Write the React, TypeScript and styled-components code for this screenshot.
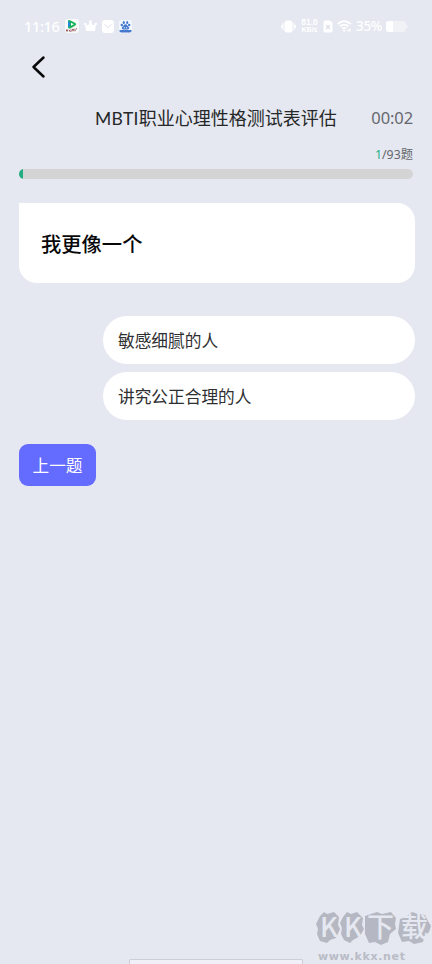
import React from "react";
import styled, { createGlobalStyle } from "styled-components";

const GlobalStyle = createGlobalStyle`
  * { box-sizing: border-box; }
  body {
    margin: 0;
    background: #e5e8f0;
    font-family: "Noto Sans CJK SC", "Noto Sans", sans-serif;
  }
`;

const Screen = styled.div`
  position: relative;
  display: flex;
  flex-direction: column;
  width: 432px;
  height: 964px;
  overflow: hidden;
  background: #e5e8f0;
`;

const StatusBar = styled.header`
  display: flex;
  justify-content: space-between;
  align-items: center;
  height: 52px;
  padding: 0 24px;
  color: #fff;
`;

const StatusGroup = styled.div<{ $gap: number }>`
  display: flex;
  align-items: center;
  gap: ${(p) => p.$gap}px;
`;

const Clock = styled.span`
  width: 36px;
  font: 500 14.5px/20px "Noto Sans", sans-serif;
  letter-spacing: -0.35px;
  white-space: nowrap;
`;

const NetSpeed = styled.span`
  display: flex;
  flex-direction: column;
  align-items: center;
  gap: 0;
  width: 19px;
  white-space: nowrap;
`;

const SpeedLine = styled.span<{ $size: number }>`
  height: 8px;
  font: 700 ${(p) => p.$size}px/8px "Liberation Sans", sans-serif;
`;

const Battery = styled.span`
  width: 26px;
  font: 500 13.5px/20px "Noto Sans", sans-serif;
  letter-spacing: -0.3px;
`;

const NavBar = styled.nav`
  display: flex;
  align-items: center;
  height: 30px;
  padding-left: 30px;
`;

const BackButton = styled.button`
  display: flex;
  width: 18px;
  height: 24px;
  padding: 0;
  border: 0;
  background: none;
`;

const Content = styled.main`
  display: flex;
  flex-direction: column;
  padding: 21px 17px 0 19px;
`;

const TitleRow = styled.div`
  display: flex;
  justify-content: flex-end;
  align-items: center;
  gap: 33px;
  height: 29px;
  padding-right: 2px;
`;

const Title = styled.h1`
  margin: 0;
  width: 243px;
  font-size: 18px;
  line-height: 28px;
  font-weight: 400;
  color: #262729;
  white-space: nowrap;
`;

const Latin = styled.span`
  font-family: Lato, sans-serif;
  font-size: 17.5px;
  letter-spacing: 0.3px;
`;

const Timer = styled.span`
  width: 42px;
  font: 400 16.5px/28px "Noto Sans", sans-serif;
  letter-spacing: -0.1px;
  text-align: right;
  color: #65676d;
  white-space: nowrap;
`;

const Counter = styled.div`
  height: 20px;
  margin-top: 13px;
  padding-right: 2px;
  font: 400 12.3px/20px "Noto Sans", "Noto Sans CJK SC", sans-serif;
  text-align: right;
  color: #65676d;
`;

const Current = styled.span`
  color: #21ad87;
`;

const Track = styled.div`
  height: 10px;
  margin: 4px 2px 0 0;
  border-radius: 5px;
  background: #d4d4d4;
  overflow: hidden;
`;

const Fill = styled.div`
  width: 4px;
  height: 100%;
  background: #21ad81;
`;

const QuestionCard = styled.section`
  display: flex;
  align-items: center;
  height: 80px;
  margin-top: 24px;
  padding: 0 22px;
  border-radius: 0 18px 18px 18px;
  background: #fff;
  font-size: 20.3px;
  font-weight: 500;
  color: #08080a;
`;

const Answers = styled.div`
  display: flex;
  flex-direction: column;
  gap: 8.5px;
  margin: 32.5px 0 0 84px;
`;

const Answer = styled.button`
  height: 48px;
  padding: 0 15px;
  border: 0;
  border-radius: 24px;
  background: #fff;
  font: 400 16.7px/24px "Noto Sans CJK SC", sans-serif;
  text-align: left;
  color: #2e2f31;
`;

const PreviousButton = styled.button`
  width: 77px;
  height: 42px;
  margin-top: 24px;
  padding: 0;
  border: 0;
  border-radius: 9px;
  background: #646bff;
  font: 400 16.7px/24px "Noto Sans CJK SC", sans-serif;
  color: #fff;
`;

const Watermark = styled.div`
  position: absolute;
  left: 315px;
  bottom: 0;
  width: 117px;
  height: 54px;
`;

const StoneLogo = styled.svg`
  display: block;
  overflow: visible;
`;

const SiteAddress = styled.div`
  padding-left: 3px;
  margin-top: 4px;
  font: 700 11px/14px "DejaVu Sans", sans-serif;
  letter-spacing: 0.65px;
  color: #b9bcc6;
  white-space: nowrap;
`;

const HomeHandle = styled.div`
  position: absolute;
  left: 129px;
  bottom: 0;
  width: 174px;
  height: 5px;
  border: 1px solid #cdcdd7;
  border-bottom: 0;
  border-radius: 2px 2px 0 0;
  background: #f1f0f8;
`;

const VideoIcon = () => (
  <svg width="14" height="14" viewBox="0 0 14 14">
    <rect width="14" height="14" rx="3" fill="#f7faf9" />
    <path d="M3 2.2Q3 .5 5 1.2L10.4 4Q12 5.2 10.4 6.5L5.3 9.4Q3 10 3 8Z" fill="#16b456" />
    <path d="M3 2.2v6.3L5.2 7V3Z" fill="#2288d5" />
    <path d="m6 3.7 2.8 1.5L6 6.8Z" fill="#fff" />
    <path d="M1 11.3h2m-1-1v2.5m2-2 1 2m1-2.5v2.5m1-2h2m-1-1v2.5m2-2.5v2.5m1-2.5h1" stroke="#8d4549" strokeWidth=".9" />
  </svg>
);
const CrownIcon = () => (
  <svg width="13" height="12" viewBox="0 0 13 12" fill="#fff">
    <path d="m1 4 3 1.5L6.5 1 9 5.5 12 4l-1 7H2Z" />
    <circle cx="1.2" cy="4" r="1.2" /><circle cx="11.8" cy="4" r="1.2" /><circle cx="6.5" cy="1.7" r="1.4" />
  </svg>
);
const MailIcon = () => (
  <svg width="12" height="13" viewBox="0 0 12 13">
    <rect width="12" height="13" rx="3" fill="#fff" />
    <path d="m2.5 4.5 3.5 3 3.5-3" fill="none" stroke="#dfe3ec" />
  </svg>
);
const PawIcon = () => (
  <svg width="13" height="13" viewBox="0 0 13 13">
    <rect width="13" height="13" rx="3" fill="#f3f8ff" />
    <g fill="#4479cc">
      <ellipse cx="4.8" cy="2.5" rx="1.1" ry="1.5" /><ellipse cx="8.2" cy="2.5" rx="1.1" ry="1.5" />
      <circle cx="2.8" cy="5" r="1.2" /><circle cx="10.2" cy="5" r="1.2" />
      <path d="M6.5 4.2C4.8 4.2 4.6 6 3.2 7c-1 1 0 2.5 1.2 2.5h4.2c1.2 0 2.2-1.5 1.2-2.5-1.4-1-1.6-2.8-3.3-2.8Z" />
      <path d="M.5 10h12v1.4l-1.5 1.1H2L.5 11.4Z" />
    </g>
    <path d="M4.8 7h1v1.4h-1Zm2.3 0h1v1.4h-1Z" fill="#cfe1ff" />
  </svg>
);
const VibrateIcon = () => (
  <svg width="15" height="13" viewBox="0 0 15 13" fill="#fff">
    <rect x="3.5" y="0.5" width="8" height="12" rx="2.5" />
    <path d="M2 3v7M.7 5v3M13 3v7M14.3 5v3" stroke="#fff" strokeWidth="1.1" />
  </svg>
);
const SimIcon = () => (
  <svg width="10" height="13" viewBox="0 0 10 13">
    <path d="M2 .5h5L9.5 3v7.5q0 2-2 2H2q-1.5 0-1.5-2V2Q.5.5 2 .5Z" fill="#fff" />
    <path d="m3 5 4 4m0-4L3 9" stroke="#dce0ea" strokeWidth="1.2" />
  </svg>
);
const WifiIcon = () => (
  <svg width="15" height="12" viewBox="0 0 15 12" fill="none" stroke="#fff" strokeWidth="1.7">
    <path d="M.7 4Q7-1.7 13.8 4M3 6.4q4.1-3.7 8.5 0M5.3 8.7q2-1.7 4 0" />
    <path d="m6.2 10 1 1 1-1M11 9.5v2m2-3v3" strokeWidth="1.4" />
  </svg>
);
const BatteryIcon = () => (
  <svg width="22" height="11" viewBox="0 0 22 11">
    <rect width="20" height="11" rx="3" fill="#f1f2f6" />
    <path d="M3 0h4v11H3q-3 0-3-3V3q0-3 3-3Z" fill="#fff" />
    <path d="M20.5 3.5q1.5 2 0 4Z" fill="#fff" />
  </svg>
);

const LogoText = styled.text`
  font-family: "Noto Sans CJK SC", sans-serif;
  font-weight: 500;
  fill: #e5e8f0;
`;

const answers = ["敏感细腻的人", "讲究公正合理的人"];

export default function App() {
  return (
    <Screen>
      <GlobalStyle />
      <StatusBar>
        <StatusGroup $gap={5}>
          <Clock>11:16</Clock>
          <VideoIcon /><CrownIcon /><MailIcon /><PawIcon />
        </StatusGroup>
        <StatusGroup $gap={4}>
          <VibrateIcon />
          <NetSpeed>
            <SpeedLine $size={8.5}>81.0</SpeedLine>
            <SpeedLine $size={7}>KB/s</SpeedLine>
          </NetSpeed>
          <SimIcon /><WifiIcon />
          <Battery>35%</Battery>
          <BatteryIcon />
        </StatusGroup>
      </StatusBar>
      <NavBar>
        <BackButton aria-label="返回">
          <svg width="18" height="24" viewBox="0 0 18 24" fill="none" stroke="#08090b" strokeWidth="2.5" strokeLinecap="round" strokeLinejoin="round">
            <path d="M13.5 2.5 3.5 12l10 9.5" />
          </svg>
        </BackButton>
      </NavBar>
      <Content>
        <TitleRow>
          <Title><Latin>MBTI</Latin>职业心理性格测试表评估</Title>
          <Timer>00:02</Timer>
        </TitleRow>
        <Counter><Current>1</Current>/93题</Counter>
        <Track><Fill /></Track>
        <QuestionCard>我更像一个</QuestionCard>
        <Answers>{answers.map((label) => <Answer key={label}>{label}</Answer>)}</Answers>
        <PreviousButton>上一题</PreviousButton>
      </Content>
      <HomeHandle />
      <Watermark>
        <StoneLogo width="117" height="36" viewBox="0 0 117 36">
          <g fill="#b5b8c2">
            <path d="m5 6 4-4 3 2 7-2 5 5-1 8 2 4-4 9-6 2-3 3-7-2-3-7 1-5-2-5Z" />
            <path d="m28 7 4-5 4 2 6-2 6 6-1 7 2 4-4 7-7 4-3 3-6-3-3-6 1-6-2-5Z" />
            <path d="m50 6 12-4 5 2 9-2 5 6-1 6 1 5-6 5-2 8-7 3-6-3-6 1-4-9Z" />
            <path d="m85 9 6-2 6-5 6 2 7 1 3 6 3 5-2 6-5 5-1 5-9 2-5-3-7 1-4-9 1-7Z" />
          </g>
          <LogoText x="5" y="27" fontSize="27">K</LogoText>
          <LogoText x="29" y="27" fontSize="27">K</LogoText>
          <LogoText x="52" y="27" fontSize="27">下</LogoText>
          <LogoText x="86" y="27" fontSize="27">载</LogoText>
        </StoneLogo>
        <SiteAddress>www.kkx.net</SiteAddress>
      </Watermark>
    </Screen>
  );
}
